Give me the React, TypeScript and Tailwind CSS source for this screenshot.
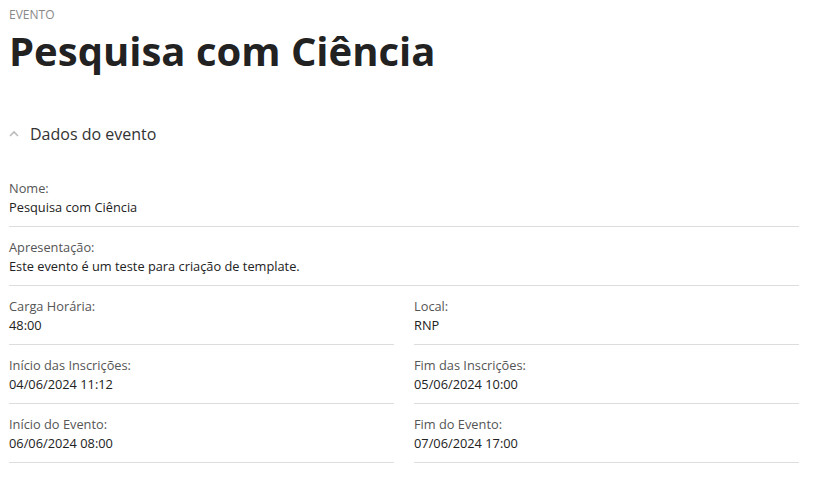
import React from 'react';

type Field = { label: string; value: string };

const FieldRow: React.FC<Field> = ({ label, value }) => (
  <div className="border-b border-[#dddddd] pt-[11px] pb-[9px] text-[12.8px] leading-[19px]">
    <div className="text-[#555555]">{label}</div>
    <div className="text-[#222222]">{value}</div>
  </div>
);

const pairs: [Field, Field][] = [
  [
    { label: 'Carga Horária:', value: '48:00' },
    { label: 'Local:', value: 'RNP' },
  ],
  [
    { label: 'Início das Inscrições:', value: '04/06/2024 11:12' },
    { label: 'Fim das Inscrições:', value: '05/06/2024 10:00' },
  ],
  [
    { label: 'Início do Evento:', value: '06/06/2024 08:00' },
    { label: 'Fim do Evento:', value: '07/06/2024 17:00' },
  ],
];

export default function App() {
  return (
    <div className="min-h-screen bg-white pl-[9px] pr-[16px] pt-[7px] font-['Open_Sans',sans-serif]">
      <div className="text-[12px] leading-[16px] uppercase text-[#888888]">Evento</div>
      <h1 className="text-[40px] font-bold leading-[56px] text-[#222222]">Pesquisa com Ciência</h1>

      <div className="mt-[43px] flex items-center gap-[11px]">
        <svg width="10" height="8" viewBox="0 0 10 8" className="text-[#bbbbbb]">
          <path d="M1 6 L5 2 L9 6" fill="none" stroke="currentColor" strokeWidth="1.6" />
        </svg>
        <span className="text-[16px] leading-[24px] text-[#333333]">Dados do evento</span>
      </div>

      <div className="mt-[22px]">
        <FieldRow label="Nome:" value="Pesquisa com Ciência" />
        <FieldRow label="Apresentação:" value="Este evento é um teste para criação de template." />
        {pairs.map(([a, b], i) => (
          <div key={i} className="grid grid-cols-2 gap-x-[20px]">
            <FieldRow {...a} />
            <FieldRow {...b} />
          </div>
        ))}
      </div>
    </div>
  );
}
